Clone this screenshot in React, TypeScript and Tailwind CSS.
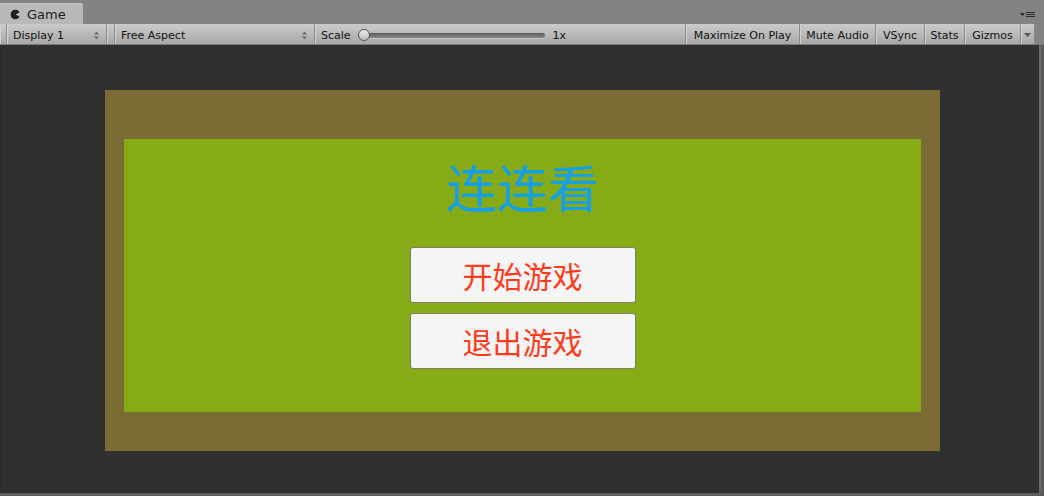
import React from 'react'

const ui = { fontFamily: '"DejaVu Sans", "Liberation Sans", sans-serif' }
const cjk = { fontFamily: '"Noto Sans CJK SC", "Noto Sans", sans-serif' }

function UpDown() {
  return (
    <svg width="7" height="9" viewBox="0 0 7 9" className="shrink-0">
      <path d="M3.5 0.5 L6 3.5 L1 3.5 Z" fill="#6b6b6b" />
      <path d="M3.5 8.5 L6 5.5 L1 5.5 Z" fill="#6b6b6b" />
    </svg>
  )
}

function Cell({ children, className = '' }: { children: React.ReactNode; className?: string }) {
  return (
    <div className={`h-full flex items-center pt-[2px] border-r border-[#8c8c8c] shadow-[inset_1px_0_0_#d2d2d2] ${className}`}>
      {children}
    </div>
  )
}

export default function App() {
  return (
    <div className="w-[1044px] h-[496px] bg-[#838383] flex flex-col overflow-hidden" style={ui}>
      {/* tab strip */}
      <div className="h-[24px] flex items-end justify-between shrink-0">
        <div className="w-[83px] h-[21px] bg-[#b9b9b9] rounded-tr-[3px] flex items-center pl-[10px] pt-[1px] gap-[6px] shadow-[inset_0_1px_0_#c8c8c8]">
          <svg width="11" height="11" viewBox="0 0 11 11">
            <path d="M9.6 3.2 A4.8 4.8 0 1 0 9.6 7.8 L5.6 5.5 Z" fill="#1e1e1e" />
          </svg>
          <span className="text-[13px] text-[#1a1a1a] leading-none">Game</span>
        </div>
        <div className="flex items-center gap-[1px] mr-[9px] mb-[7px]">
          <svg width="5" height="3" viewBox="0 0 5 3">
            <path d="M0 0 H5 L2.5 3 Z" fill="#2a2a2a" />
          </svg>
          <div className="flex flex-col gap-[1px]">
            <div className="w-[9px] h-[1px] bg-[#2a2a2a]" />
            <div className="w-[9px] h-[1px] bg-[#2a2a2a]" />
            <div className="w-[9px] h-[1px] bg-[#2a2a2a]" />
          </div>
        </div>
      </div>

      {/* toolbar */}
      <div className="h-[21px] shrink-0 flex bg-gradient-to-b from-[#cbcbcb] to-[#a8a8a8] text-[11px] leading-none text-[#111] border-b border-[#7a7a7a]">
        <Cell className="w-[7px]">{null}</Cell>
        <Cell className="w-[100px] px-[6px] justify-between">
          <span>Display 1</span>
          <UpDown />
        </Cell>
        <Cell className="w-[8px]">{null}</Cell>
        <Cell className="w-[200px] px-[6px] justify-between">
          <span>Free Aspect</span>
          <UpDown />
        </Cell>
        <Cell className="w-[371px] pl-[6px]">
          <span>Scale</span>
          <div className="relative ml-[7px] w-[187px] h-[12px] flex items-center">
            <div className="w-full h-[5px] rounded-full bg-gradient-to-b from-[#5c5c5c] to-[#8a8a8a] shadow-[0_1px_0_#c4c4c4]" />
            <div className="absolute left-0 top-0 w-[12px] h-[12px] rounded-full border border-[#555] bg-gradient-to-b from-[#f0f0f0] to-[#b8b8b8]" />
          </div>
          <span className="ml-[8px]">1x</span>
        </Cell>
        <Cell className="w-[114px] justify-center">Maximize On Play</Cell>
        <Cell className="w-[76px] justify-center">Mute Audio</Cell>
        <Cell className="w-[49px] justify-center">VSync</Cell>
        <Cell className="w-[40px] justify-center">Stats</Cell>
        <Cell className="w-[56px] justify-center">Gizmos</Cell>
        <Cell className="w-[14px] justify-center">
          <svg width="7" height="4" viewBox="0 0 7 4">
            <path d="M0 0 H7 L3.5 4 Z" fill="#555" />
          </svg>
        </Cell>
        <div className="flex-1 bg-[#838383]" />
      </div>

      {/* game view */}
      <div className="flex-1 flex min-h-0">
        <div className="w-[1039px] h-[448px] bg-[#303030] border-l border-[#2a2a2a] pl-[104px] pt-[45px]">
          <div className="w-[835px] h-[361px] bg-[#7a6c34] pt-[49px] pl-[19px]">
            <div className="w-[797px] h-[273px] bg-[#86ab16] flex flex-col items-center">
              <div className="mt-[18px] text-[51px] leading-[59px] text-[#14a0e6]" style={cjk}>
                连连看
              </div>
              <button className="mt-[31px] w-[226px] h-[56px] bg-[#f5f5f5] border border-[#7d7d6a] rounded-[3px] text-[30px] text-[#ff3b1c] flex items-center justify-center" style={cjk}>
                开始游戏
              </button>
              <button className="mt-[10px] w-[226px] h-[56px] bg-[#f5f5f5] border border-[#7d7d6a] rounded-[3px] text-[30px] text-[#ff3b1c] flex items-center justify-center" style={cjk}>
                退出游戏
              </button>
            </div>
          </div>
        </div>
        <div className="w-[2px] bg-[#6a6a6a]" />
        <div className="flex-1 bg-[#5a5a5a]" />
      </div>
      <div className="h-[3px] shrink-0 bg-[#5c5c5c]" />
    </div>
  )
}
